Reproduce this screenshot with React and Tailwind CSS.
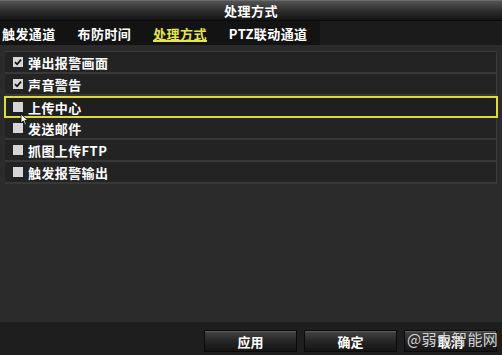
import React from "react";

const font = { fontFamily: '"Noto Sans CJK SC", "Liberation Sans", sans-serif' };

function Check({ checked }) {
  return (
    <div className="w-[10px] h-[10px] bg-[#d6d6d6] flex items-center justify-center shrink-0">
      {checked && (
        <svg width="8" height="8" viewBox="0 0 8 8">
          <path d="M1 4.2 L3.1 6.3 L7 1.6" stroke="#111" strokeWidth="1.7" fill="none" />
        </svg>
      )}
    </div>
  );
}

const rows = [
  { label: "弹出报警画面", checked: true },
  { label: "声音警告", checked: true },
  { label: "上传中心", checked: false, active: true },
  { label: "发送邮件", checked: false },
  { label: "抓图上传FTP", checked: false },
  { label: "触发报警输出", checked: false },
];

const tabs = ["触发通道", "布防时间", "处理方式", "PTZ联动通道"];

export default function App() {
  return (
    <div
      className="w-[502px] h-[355px] bg-[#2b2b2b] flex flex-col overflow-hidden relative text-white font-bold text-[13px]"
      style={font}
    >
      {/* title bar */}
      <div className="h-[21px] shrink-0 bg-gradient-to-b from-[#545454] via-[#2e2e2e] to-[#141414] border-t border-[#6a6a6a] border-b border-b-[#0a0a0a] flex items-center justify-center leading-none">
        <span className="tracking-[0.5px]">处理方式</span>
      </div>
      {/* tab bar */}
      <div className="h-[24px] shrink-0 bg-[#1b1b1b] flex">
        <div className="w-[320px] bg-[#131313] flex items-center gap-[22px] pl-[2px] leading-none">
          {tabs.map((t, i) => (
            <div key={t} className="relative flex items-center h-full">
              <span className={i === 2 ? "text-[#e6e64a] tracking-[0.4px]" : "tracking-[0.4px]"}>{t}</span>
              {i === 2 && (
                <div className="absolute left-0 right-0 bottom-[3px] h-[2px] bg-[#e6e64a]" />
              )}
            </div>
          ))}
        </div>
      </div>
      {/* content */}
      <div className="flex-1 pt-[6px] px-[5px]">
        <div className="border-t border-r border-[#3a3a3a] rounded-tr-[3px]">
          {rows.map((r) => (
            <div
              key={r.label}
              className={
                r.active
                  ? "h-[22px] flex items-center gap-[5px] pl-[7px] bg-[#1f1f1f] border-2 border-[#dcdc3c] -mx-[1px] -mr-[2px] leading-none"
                  : "h-[22px] flex items-center gap-[5px] pl-[8px] bg-[#232323] border-b-2 border-[#383838] leading-none"
              }
            >
              <Check checked={r.checked} />
              <span className="tracking-[0.4px]">{r.label}</span>
            </div>
          ))}
        </div>
      </div>
      {/* bottom bar */}
      <div className="h-[33px] shrink-0 bg-[#1e1e1e] flex justify-end items-start pt-[8px] pr-[5px] gap-[7px]">
        {["应用", "确定", "取消"].map((b) => (
          <div
            key={b}
            className="w-[93px] h-[22px] border border-[#0a0a0a] bg-gradient-to-b from-[#454545] via-[#262626] to-[#151515] flex items-center justify-center leading-none shadow-[inset_0_1px_0_#5a5a5a]"
          >
            {b}
          </div>
        ))}
      </div>
      {/* watermark */}
      <div className="absolute left-[407px] top-[331px] text-[15px] font-normal text-[#d2d2d2] leading-none tracking-[0.3px]">
        @弱电智能网
      </div>
      {/* cursor */}
      <svg className="absolute left-[20px] top-[113px]" width="9" height="13" viewBox="0 0 9 13">
        <path d="M1 1 L1 10 L3.3 8 L5 12 L6.4 11.4 L4.8 7.6 L8 7.6 Z" fill="#fff" stroke="#000" strokeWidth="0.8" />
      </svg>
    </div>
  );
}
